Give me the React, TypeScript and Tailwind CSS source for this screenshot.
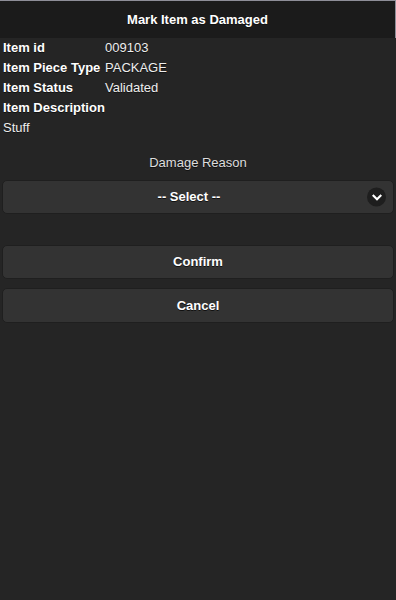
const rows: [string, string][] = [
  ["Item id", "009103"],
  ["Item Piece Type", "PACKAGE"],
  ["Item Status", "Validated"],
];

function Button({ label, className }: { label: string; className?: string }) {
  return (
    <button
      className={`mx-[2px] flex h-[34px] items-center justify-center rounded-[5px] border border-[#1f1f1f] bg-[#333333] text-[13px] font-bold text-white [text-shadow:0_1px_0_#111] ${className ?? ""}`}
    >
      {label}
    </button>
  );
}

export default function App() {
  return (
    <div
      className="flex min-h-[600px] w-[396px] flex-col bg-[#252525] text-[13px] text-white"
      style={{ fontFamily: '"Liberation Sans", Arial, sans-serif' }}
    >
      <header className="flex h-[38px] items-center justify-center border-t border-r border-[#8e8e98] bg-[#1b1b1b]">
        <h1 className="text-[13px] font-bold [text-shadow:0_1px_0_#111]">
          Mark Item as Damaged
        </h1>
      </header>

      <div className="px-[3px] [text-shadow:0_1px_0_#111]">
        {rows.map(([label, value]) => (
          <div key={label} className="flex h-[20px] items-center">
            <span className="w-[102px] shrink-0 font-bold">{label}</span>
            <span className="text-[#eeeeee]">{value}</span>
          </div>
        ))}
        <div className="flex h-[20px] items-center font-bold">Item Description</div>
        <div className="flex h-[20px] items-center text-[#eeeeee]">Stuff</div>
      </div>

      <label className="mt-[15px] flex h-[20px] items-center justify-center text-[#dddddd] [text-shadow:0_1px_0_#111]">
        Damage Reason
      </label>

      <div className="relative mx-[2px] mt-[7px] flex h-[34px] items-center justify-center rounded-[5px] border border-[#1f1f1f] bg-[#333333] pr-[18px]">
        <span className="text-[13px] font-bold text-white [text-shadow:0_1px_0_#111]">
          -- Select --
        </span>
        <span className="absolute right-[7px] top-1/2 flex h-[19px] w-[19px] -translate-y-1/2 items-center justify-center rounded-full bg-[#1e1e1e]">
          <svg width="10" height="10" viewBox="0 0 10 10" fill="none">
            <path
              d="M1.5 3.2 L5 6.7 L8.5 3.2"
              stroke="white"
              strokeWidth="2.2"
              strokeLinecap="square"
            />
          </svg>
        </span>
      </div>

      <Button label="Confirm" className="mt-[31px]" />
      <Button label="Cancel" className="mt-[9px] h-[35px]" />
    </div>
  );
}
